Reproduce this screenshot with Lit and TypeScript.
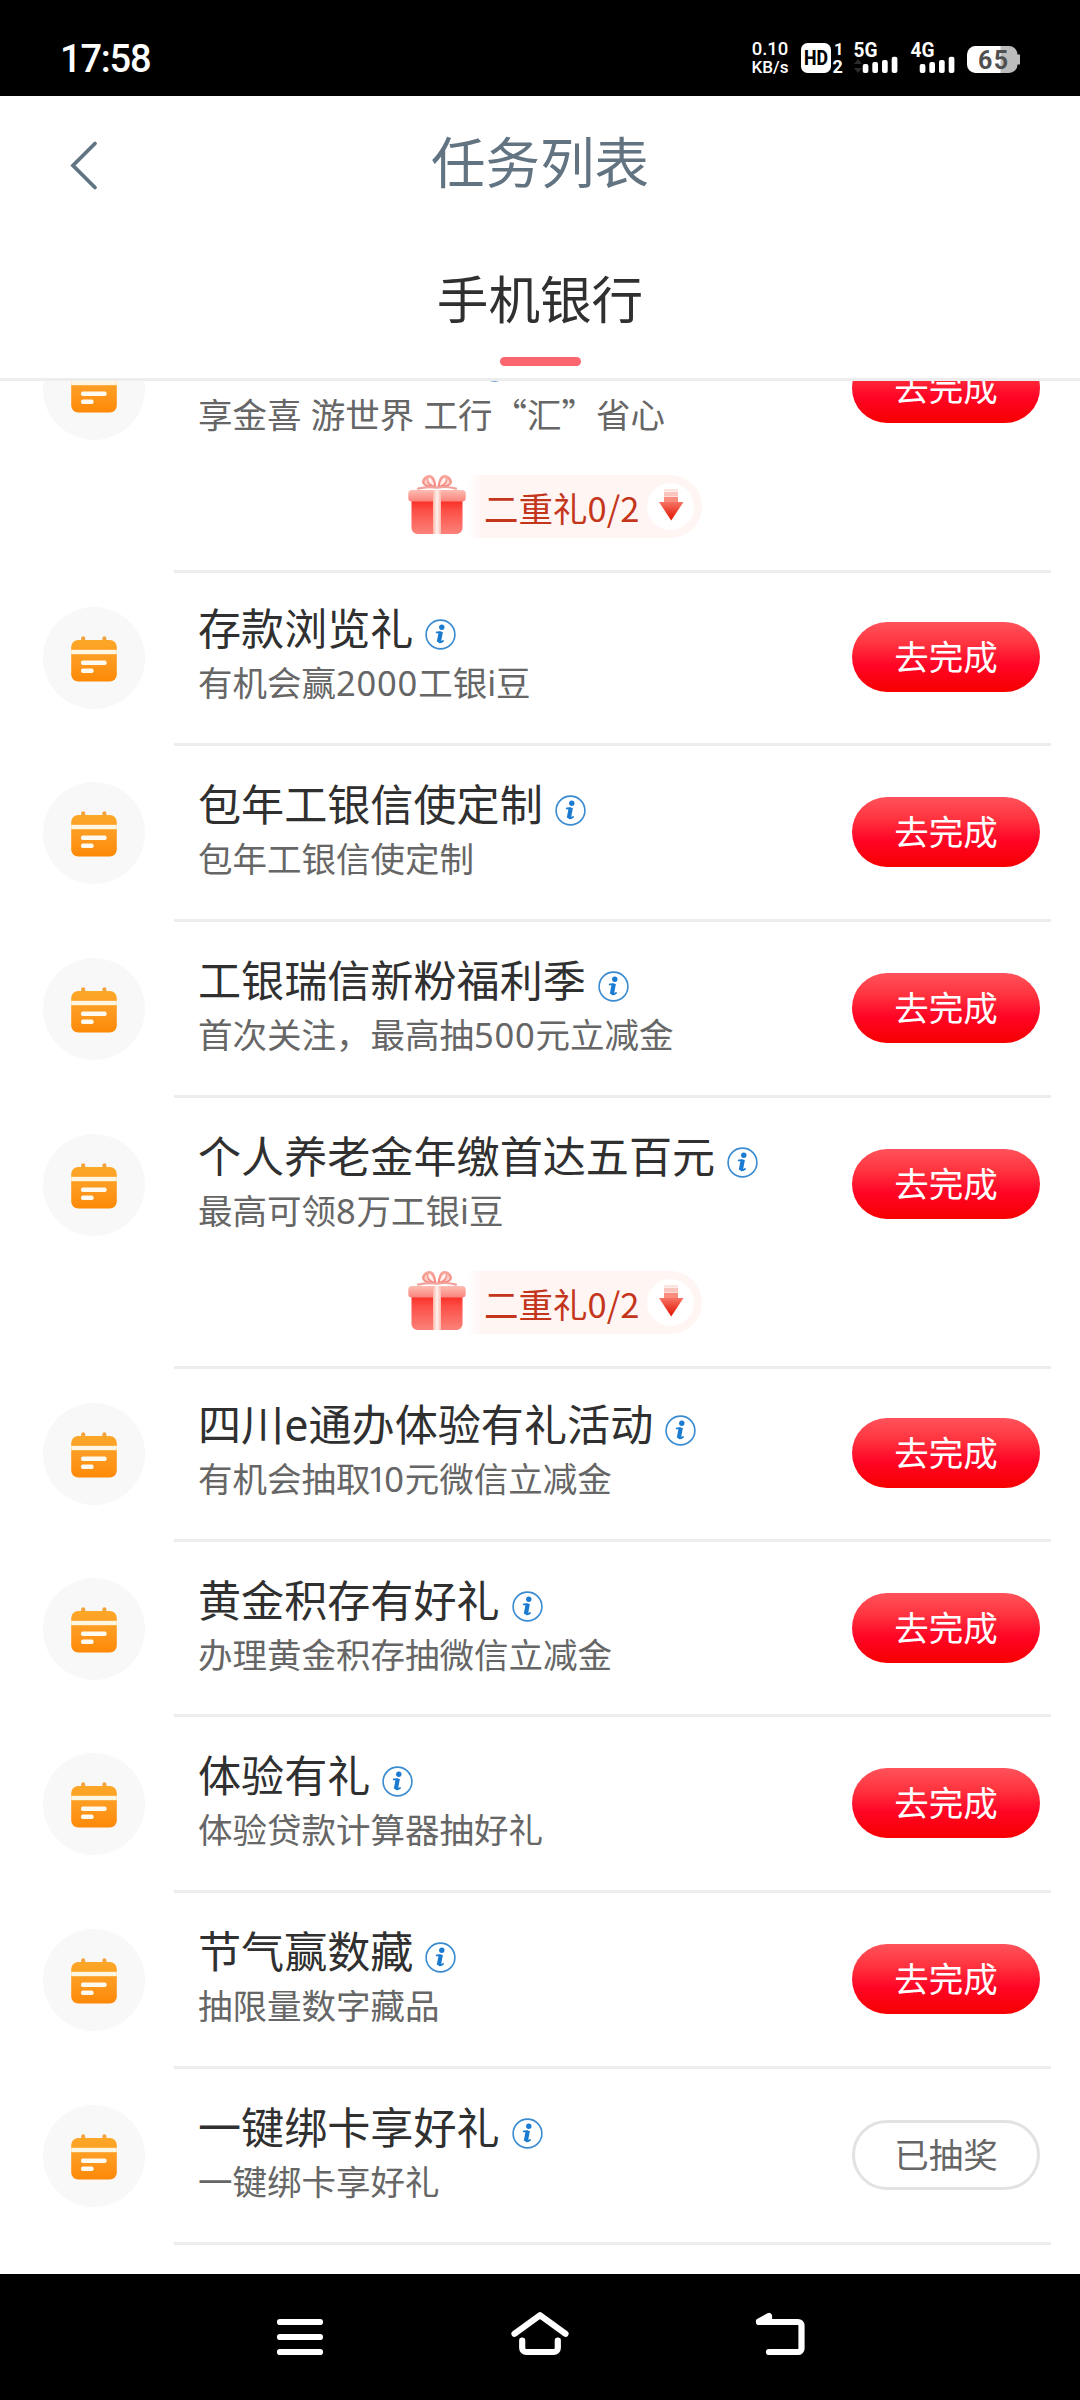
import { LitElement, html, svg, css, nothing } from "lit";
import { customElement, property } from "lit/decorators.js";
import { classMap } from "lit/directives/class-map.js";
import { styleMap } from "lit/directives/style-map.js";

interface Task {
  title: string;
  /** Width kept for a title that is scrolled out of view. */
  lead?: number;
  desc: string;
  done?: boolean;
  gift?: string;
  height: number;
  afterGift?: boolean;
}

const TASKS: Task[] = [
  { title: "", lead: 269, desc: "享金喜 游世界 工行“汇”省心", gift: "二重礼0/2", height: 271 },
  { title: "存款浏览礼", desc: "有机会赢2000工银i豆", height: 173, afterGift: true },
  { title: "包年工银信使定制", desc: "包年工银信使定制", height: 176 },
  { title: "工银瑞信新粉福利季", desc: "首次关注，最高抽500元立减金", height: 176 },
  { title: "个人养老金年缴首达五百元", desc: "最高可领8万工银i豆", gift: "二重礼0/2", height: 271 },
  { title: "四川e通办体验有礼活动", desc: "有机会抽取10元微信立减金", height: 173, afterGift: true },
  { title: "黄金积存有好礼", desc: "办理黄金积存抽微信立减金", height: 175 },
  { title: "体验有礼", desc: "体验贷款计算器抽好礼", height: 176 },
  { title: "节气赢数藏", desc: "抽限量数字藏品", height: 176 },
  { title: "一键绑卡享好礼", desc: "一键绑卡享好礼", height: 176, done: true },
];

/** Wraps digits and Latin letters so they take the wider Latin face; a "1" is set narrow. */
const mixed = (text: string) =>
  text.split(/(1|[02-9]+|[A-Za-z]+)/).map((part) => {
    if (part === "1") return html`<span class="latin one">${part}</span>`;
    if (/^[0-9]+$/.test(part)) return html`<span class="latin digits">${part}</span>`;
    if (/^[A-Za-z]+$/.test(part)) return html`<span class="latin">${part}</span>`;
    return part;
  });

const calendarIcon = html`<svg class="calendar" width="46" height="46" viewBox="0 0 46 46">
  <defs>
    <linearGradient id="cal" x1="0" y1="0" x2="0" y2="1">
      <stop offset="0" stop-color="#fca728" />
      <stop offset="0.5" stop-color="#fd9a20" />
      <stop offset="1" stop-color="#fe8907" />
    </linearGradient>
  </defs>
  <path d="M10.2 6V2.2a2 2 0 0 1 4 0V6zM31.4 6V2.2a2 2 0 0 1 4 0V6z" fill="#f2a23a" />
  <rect x="0.2" y="4" width="45.6" height="41.6" rx="7" fill="url(#cal)" />
  <rect x="0.2" y="13.8" width="45.6" height="4.4" fill="#fff6e2" />
  <rect x="10" y="24.6" width="25.6" height="4.4" rx="1.8" fill="#fffaf0" />
  <rect x="10" y="32.6" width="12.6" height="4.4" rx="1.8" fill="#fffaf0" />
</svg>`;

const infoIcon = html`<svg class="info" width="31" height="31" viewBox="0 0 31 31" fill="none">
  <circle cx="15.5" cy="15.5" r="14.4" stroke="#3a8bd0" stroke-width="1.6" />
  <circle cx="16.8" cy="8.2" r="2.7" fill="#1a7bd0" />
  <path d="M11.7 13.4h3.6" stroke="#1a7bd0" stroke-width="1.8" stroke-linecap="round" />
  <path d="M15.9 13.6l-1.7 8.2c-.3 1.9.6 2.2 3.8.2" stroke="#1a7bd0" stroke-width="1.9" stroke-linecap="round" />
  <path d="M15.8 12.600l-1.9 10.600" stroke="#1a7bd0" stroke-width="4.200" />
</svg>`;

const giftIcon = html`<svg class="gift" width="58" height="61" viewBox="0 0 58 61">
  <defs>
    <linearGradient id="box" x1="0" y1="0" x2="0" y2="1">
      <stop offset="0" stop-color="#f8281f" />
      <stop offset="0.3" stop-color="#fc4d45" />
      <stop offset="1" stop-color="#fb8279" />
    </linearGradient>
    <linearGradient id="lid" x1="0" y1="0" x2="0" y2="1">
      <stop offset="0" stop-color="#fcbcb2" />
      <stop offset="1" stop-color="#fb837b" />
    </linearGradient>
    <linearGradient id="ribbon" x1="0" y1="0" x2="1" y2="0">
      <stop offset="0" stop-color="#fdb5a8" />
      <stop offset="0.5" stop-color="#fff3ee" />
      <stop offset="1" stop-color="#fdb9ae" />
    </linearGradient>
    <linearGradient id="bow" x1="0" y1="0" x2="0" y2="1">
      <stop offset="0" stop-color="#f9a69c" />
      <stop offset="1" stop-color="#f3837c" />
    </linearGradient>
  </defs>
  <path d="M28.500 14C21 14.500 14.500 12 14 8c0-4 5-8.200 9.500-6.500 3.500 1.500 4.500 7 5 12.500z" fill="url(#bow)" />
  <path d="M29.500 14c7.500.5 14-2 14.500-6 0-4-5-8.200-9.500-6.500-3.500 1.500-4.500 7-5 12.500z" fill="url(#bow)" />
  <path d="M26 11.500C22 10 19.500 7.500 20.500 3.500c3 .3 5 4 5.500 8zM32 11.500c4-1.500 6.500-4 5.500-8-3 .3-5 4-5.500 8z" fill="#fff0ec" />
  <path d="M16.300 8.500c.3-2 1.200-3 2.500-4-.3 3 .7 5 3 7-3-.5-5-1.500-5.500-3zM41.700 8.500c-.3-2-1.200-3-2.500-4 .3 3-.7 5-3 7 3-.5 5-1.500 5.500-3z" fill="#fcd0c8" />
  <path d="M10 14.600c7-2 12-2 19-1 7-1 13-1 19 1" stroke="#f2a29b" stroke-width="2.200" fill="none" stroke-linecap="round" />
  <path d="M3.500 25h51v29a6 6 0 0 1-6 6h-39a6 6 0 0 1-6-6z" fill="url(#box)" />
  <rect x="0.300" y="16" width="57.400" height="11.500" rx="3.500" fill="url(#lid)" />
  <rect x="25" y="16" width="8" height="44" fill="url(#ribbon)" />
</svg>`;

const arrowIcon = html`<svg class="arrow" width="26" height="32" viewBox="0 0 26 32">
  <defs>
    <linearGradient id="tip" x1="0" y1="0" x2="0" y2="1">
      <stop offset="0" stop-color="#f77464" />
      <stop offset="0.500" stop-color="#ea4030" />
      <stop offset="1" stop-color="#e51300" />
    </linearGradient>
  </defs>
  <rect x="6" y="0" width="14" height="2.600" fill="#fde3de" />
  <rect x="6" y="3" width="14" height="4.600" fill="#fbc5bd" />
  <rect x="6" y="8" width="14" height="6" fill="#f88c7d" />
  <path d="M1 13h24.500L13.200 31.500z" fill="url(#tip)" />
</svg>`;

@customElement("status-bar")
export class StatusBar extends LitElement {
  static styles = css`
    :host {
      display: flex;
      justify-content: space-between;
      height: 96px;
      padding: 0 60px 0 60px;
      background: #000;
      color: #fff;
      box-sizing: border-box;
      font-family: Roboto, "Liberation Sans", sans-serif;
    }
    .time {
      padding-top: 37px;
      font-size: 38px;
      font-weight: 500;
      line-height: 44px;
      letter-spacing: -1.200px;
    }
    .right {
      display: flex;
      padding-top: 40px;
    }
    .speed {
      display: flex;
      flex-direction: column;
      width: 38px;
      margin-right: 11px;
      text-align: center;
      font-size: 17px;
      font-weight: 500;
      line-height: 16.500px;
      white-space: nowrap;
    }
    .rate {
      font-size: 18.500px;
      line-height: 19px;
    }
  `;

  private signal(label: string, data: boolean) {
    return html`<svg width="57" height="36" viewBox="0 0 57 36" fill="#fff">
      <text x="0.500" y="17" font-size="19.500" font-weight="700" textLength="24" lengthAdjust="spacingAndGlyphs">${label}</text>
      ${data ? svg`<path d="M1 24l4-5 4 5zM1 28l4 5 4-5z" fill="#2c2c2c" />` : nothing}
      <rect x="9.700" y="24" width="5.700" height="9" rx="2" />
      <rect x="19.300" y="22" width="5.700" height="11" rx="2" />
      <rect x="29" y="20" width="5.700" height="13" rx="2" />
      <rect x="38.700" y="16.700" width="5.700" height="16.300" rx="2" />
    </svg>`;
  }

  render() {
    return html`
      <div class="time">17:58</div>
      <div class="right">
        <div class="speed"><span class="rate">0.10</span><span>KB/s</span></div>
        <svg width="53" height="36" viewBox="0 0 53 36">
          <rect x="1" y="3" width="30" height="30" rx="6.500" fill="#fff" />
          <text x="4" y="25" font-size="19.500" font-weight="800" fill="#000" textLength="24" lengthAdjust="spacingAndGlyphs">HD</text>
          <text x="34" y="15" font-size="16.500" font-weight="700" fill="#fff">1</text>
          <text x="32.500" y="33" font-size="18" font-weight="700" fill="#fff">2</text>
        </svg>
        ${this.signal("5G", true)} ${this.signal("4G", false)}
        <svg width="53" height="36" viewBox="0 0 53 36">
          <path d="M8.500 6H34v27H8.500A8.500 8.500 0 0 1 0 24.500v-10A8.500 8.500 0 0 1 8.500 6z" fill="#fff" />
          <path d="M33.500 6H42a8.500 8.500 0 0 1 8.500 8.500H53v10h-2.500A8.500 8.500 0 0 1 42 33h-8.500z" fill="#bcbcbc" />
          <text x="11" y="28.500" font-size="25" font-weight="700" fill="#505050" textLength="30">65</text>
        </svg>
      </div>
    `;
  }
}

@customElement("task-row")
export class TaskRow extends LitElement {
  @property({ attribute: false }) task!: Task;

  static styles = css`
    :host {
      display: block;
    }
    .row {
      display: flex;
      box-sizing: border-box;
    }
    .badge {
      display: flex;
      flex: none;
      align-items: center;
      justify-content: center;
      width: 102px;
      height: 102px;
      margin: 36px 29px 0 43px;
      border-radius: 50%;
      background: #f8f8f8;
    }
    .calendar {
      display: block;
      margin-top: 1px;
    }
    .body {
      display: flex;
      flex: 1;
      flex-direction: column;
      margin-right: 29px;
      border-bottom: 3px solid #ededed;
    }
    .main {
      display: flex;
      justify-content: space-between;
      padding: 0 11px 0 24px;
    }
    .text {
      padding-top: 28px;
      white-space: nowrap;
    }
    .after-gift .badge {
      margin-top: 34px;
    }
    .after-gift .main {
      margin-top: -3px;
    }
    .title {
      display: flex;
      height: 56px;
      gap: 12px;
      color: #303030;
      font-size: 43.100px;
      line-height: 56px;
    }
    .info {
      display: block;
      margin-top: 21px;
    }
    .desc {
      height: 50px;
      margin-top: 2px;
      color: #666;
      font-size: 34.500px;
      line-height: 50px;
      word-spacing: 1.500px;
    }
    .latin {
      font-family: "Noto Sans", sans-serif;
    }
    .digits {
      letter-spacing: 0.800px;
    }
    .one {
      letter-spacing: -3px;
      margin: 0 0 0 -3px;
    }
    .action {
      width: 188px;
      height: 70px;
      margin-top: 51px;
      padding: 0;
      border: none;
      border-radius: 35px;
      background: linear-gradient(#ff525b, #ff3540 30%, #ff0526 62%, #f70000);
      color: #fff;
      font: inherit;
      font-size: 34.500px;
      line-height: 62px;
      padding-bottom: 4px;
      box-sizing: border-box;
    }
    .action.done {
      border: 3px solid #e2e2e2;
      background: #fff;
      color: #666;
      line-height: 58px;
    }
    .after-gift .action {
      margin-top: 52px;
    }
    .bonus {
      display: flex;
      align-items: center;
      align-self: flex-start;
      height: 63px;
      margin: 37px 0 0 234px;
    }
    .gift {
      flex: none;
      margin: -5px 2px 0 0;
    }
    .pill {
      display: flex;
      align-items: center;
      gap: 8px;
      height: 63px;
      padding: 0 8px 0 16px;
      border-radius: 0 32px 32px 0;
      background: linear-gradient(90deg, #fff, #fff5f3 14px);
      color: #c4361b;
      font-size: 34.500px;
      line-height: 60px;
      white-space: nowrap;
      box-sizing: border-box;
    }
    .down {
      display: flex;
      align-items: center;
      justify-content: center;
      width: 47px;
      height: 47px;
      border-radius: 50%;
      background: #fff;
    }
    .arrow {
      display: block;
      margin-top: -3px;
    }
  `;

  render() {
    const t = this.task;
    return html`
      <div
        class=${classMap({ row: true, "after-gift": !!t.afterGift })}
        style=${styleMap({ height: `${t.height}px` })}
      >
        <div class="badge">${calendarIcon}</div>
        <div class="body">
          <div class="main">
            <div class="text">
              <div class="title">
                ${t.lead
                  ? html`<span style=${styleMap({ width: `${t.lead}px` })}></span>`
                  : html`<span>${mixed(t.title)}</span>`}${infoIcon}
              </div>
              <div class="desc">${mixed(t.desc)}</div>
            </div>
            <button class=${classMap({ action: true, done: !!t.done })}>${t.done ? "已抽奖" : "去完成"}</button>
          </div>
          ${t.gift
            ? html`<div class="bonus">
                ${giftIcon}
                <div class="pill"><span>${t.gift}</span><span class="down">${arrowIcon}</span></div>
              </div>`
            : nothing}
        </div>
      </div>
    `;
  }
}

@customElement("app-root")
export class AppRoot extends LitElement {
  static styles = css`
    :host {
      display: flex;
      flex-direction: column;
      width: 1080px;
      height: 2400px;
      overflow: hidden;
      background: #fff;
      font-family: "Noto Sans CJK SC", "Noto Sans", sans-serif;
    }
    .header {
      display: grid;
      flex: none;
      grid-template-columns: 160px 1fr 160px;
      height: 134px;
      color: #627381;
    }
    .back {
      display: block;
      margin: 43px 0 0 67px;
    }
    .heading {
      margin: 0;
      padding-top: 24px;
      font-size: 54.500px;
      font-weight: 400;
      line-height: 80px;
      text-align: center;
    }
    .tabs {
      display: flex;
      flex: none;
      flex-direction: column;
      align-items: center;
      height: 151px;
      border-bottom: 3px solid #ededee;
      box-sizing: border-box;
    }
    .tab {
      height: 80px;
      margin-top: 27px;
      color: #303030;
      font-size: 51.600px;
      line-height: 80px;
    }
    .marker {
      width: 81px;
      height: 9px;
      margin-top: 20px;
      border-radius: 4.500px;
      background: #fb666f;
    }
    .list {
      display: flex;
      flex: 1;
      flex-direction: column;
      min-height: 0;
      overflow: hidden;
    }
    .rows {
      flex: none;
      margin-top: -79px;
    }
    .nav {
      display: grid;
      flex: none;
      grid-template-columns: repeat(3, 240px);
      justify-content: center;
      justify-items: center;
      height: 126px;
      padding-top: 31px;
      background: #000;
      box-sizing: border-box;
    }
  `;

  render() {
    return html`
      <status-bar></status-bar>
      <div class="header">
        <svg class="back" width="34" height="52" viewBox="0 0 34 52" fill="none" stroke="#5f7584" stroke-width="3.800" stroke-linecap="round">
          <path d="M28 4.500L6 26.500l22 22" />
        </svg>
        <h1 class="heading">任务列表</h1>
      </div>
      <div class="tabs">
        <div class="tab">手机银行</div>
        <div class="marker"></div>
      </div>
      <div class="list">
        <div class="rows">${TASKS.map((t) => html`<task-row .task=${t}></task-row>`)}</div>
      </div>
      <div class="nav">
        <svg width="60" height="60" viewBox="0 0 60 60" stroke="#fff" stroke-width="6.200" stroke-linecap="round">
          <path d="M10 17h40M10 32h40M10 47h40" />
        </svg>
        <svg width="60" height="60" viewBox="0 0 60 60" fill="none" stroke="#fff" stroke-width="6.200" stroke-linecap="round" stroke-linejoin="round">
          <path d="M4.500 28.800L30 10.200l25.500 18.600M12.200 35.500V43a4 4 0 0 0 4 4h27.600a4 4 0 0 0 4-4v-7.500" />
        </svg>
        <svg width="60" height="60" viewBox="0 0 60 60" fill="none" stroke="#fff" stroke-width="6.200" stroke-linecap="round" stroke-linejoin="round">
          <path d="M9 17h39a3.500 3.500 0 0 1 3.500 3.500v23a3.500 3.500 0 0 1-3.500 3.500H19" />
          <path d="M9 16.500l10-5.500v3.500z" />
        </svg>
      </div>
    `;
  }
}
